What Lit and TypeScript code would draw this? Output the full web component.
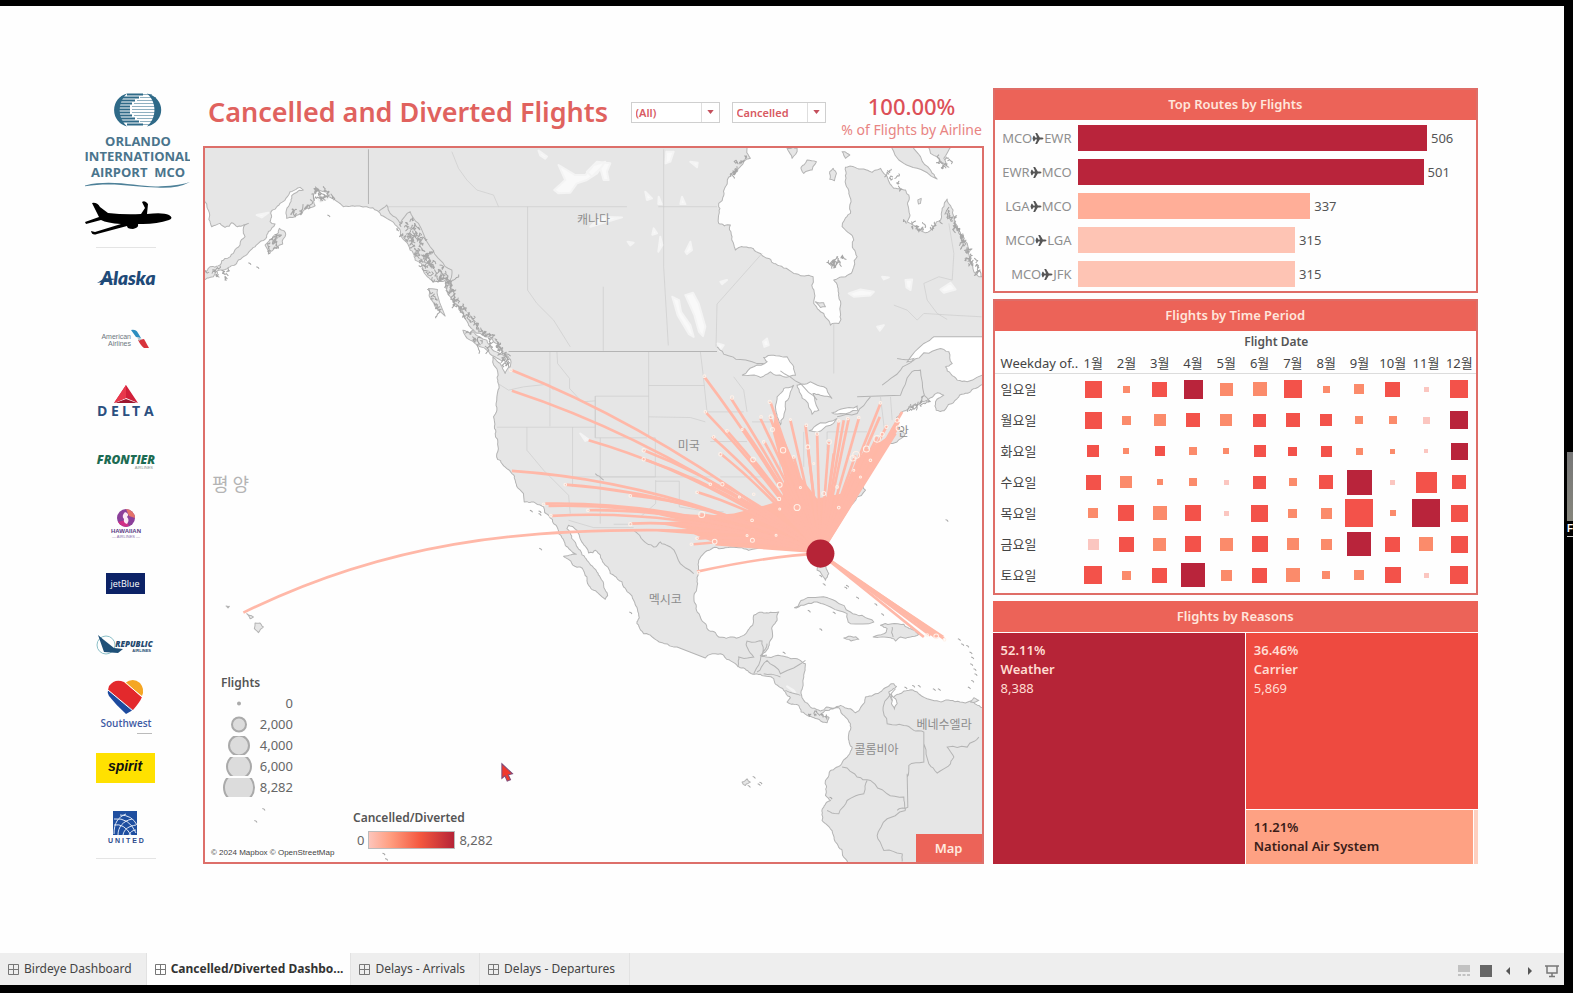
import { LitElement, html, svg, css } from "lit";
import { customElement, state } from "lit/decorators.js";

type Pt = [number, number];

/* ---------- map geometry ---------- */

const parse = (s: string, dx = 0, dy = 0): Pt[] =>
  s.trim().split(/\s+/).map((p) => {
    const [x, y] = p.split(",").map(Number);
    return [x + dx, y + dy] as Pt;
  });

let seed = 7;
const rnd = () => {
  seed = (seed * 16807) % 2147483647;
  return seed / 2147483647 - 0.5;
};

/* Midpoint displacement gives the coast its ragged outline. */
const rough = (pts: Pt[], amp: number, depth = 2): Pt[] => {
  let out = pts;
  for (let d = 0; d < depth; d++) {
    const next: Pt[] = [];
    for (let i = 0; i < out.length - 1; i++) {
      const [x1, y1] = out[i];
      const [x2, y2] = out[i + 1];
      next.push(out[i]);
      const len = Math.hypot(x2 - x1, y2 - y1);
      if (len > 9 && len < 90) {
        const k = Math.min(amp, len * 0.3);
        next.push([(x1 + x2) / 2 + rnd() * k, (y1 + y2) / 2 + rnd() * k]);
      }
    }
    next.push(out[out.length - 1]);
    out = next;
  }
  return out;
};

const line = (pts: Pt[], close = false) =>
  "M" + pts.map(([x, y]) => `${x.toFixed(1)} ${y.toFixed(1)}`).join("L") + (close ? "Z" : "");

const E = 1170;

const mainland: Pt[] = [
  ...parse(`0,190 0,365 15,365 25,390 35,440 60,430 75,442 95,428 112,440 145,430 130,445 135,470 120,495
   100,520 75,535 60,555 30,560 10,580 10,600 40,590 60,570 85,562 110,550 115,540 150,512 175,490 200,465 225,432
   210,425 212,400 240,370 262,350 270,335 300,322 310,330 275,347 265,380 260,415 285,410 320,385 345,377
   340,345 350,325 380,335 385,350 405,360 430,380 470,378 500,380 535,395 560,415 600,450 612,480 630,510
   645,540 670,572 700,605 735,600 740,630 765,670 790,700 805,735 840,760 870,770 900,800 925,830 930,860
   915,880 900,850 878,830 885,860 893,900 890,950 880,1010 885,1060 890,1120 905,1150 920,1165 935,1180
   945,1200 970,1240 972,1265 1000,1265 1030,1280 1045,1305 1060,1330 1075,1360 1095,1395 1128,1422 1090,1428
   1115,1450 1140,1460 1160,1490 1165,1515 1195,1540 1215,1557 1222,1546 1210,1515 1190,1475 1160,1440
   1140,1410 1120,1380 1100,1345 1105,1335 1130,1350 1142,1380 1165,1418`),
  ...parse(`15,240 35,268 60,310 100,350 130,390 145,430 140,460 160,490 200,510 260,530 345,563 375,550 400,555
   440,585 475,605 510,612 550,625 580,660 600,682 590,695 625,705 650,735 680,745 710,757 716,742 690,732
   720,716 745,712 770,745 780,760 775,790 785,830 770,860 750,885 720,900 705,930 705,975 720,990 700,1010
   695,1050 720,1075 740,1120 765,1165 780,1190 1190,1190 1190,720 1165,705 1140,692 1080,690 1010,685
   980,665 940,662 915,675 905,690 900,680 895,665 918,648 910,640 880,655 855,670 825,680 815,705 795,727
   780,715 750,705 720,712 690,722 660,710 640,690 632,670 640,620 645,580 620,565 580,558 530,560 510,555
   525,545 540,510 545,470 560,450 565,425 525,428 490,435 480,470 460,495 420,500 385,500 355,480 330,440
   315,400 320,350 325,300 325,270 345,245 380,232 420,230 500,235 540,225 600,230 650,240 670,270 680,300
   705,330 715,310 710,270 700,230 715,200 760,130 800,80 825,60 815,45 810,20 830,0`, E, E),
  ...parse(`835,1160 880,1100 945,1060 925,1045 915,1020 935,995 960,980 1010,960 1040,938 1060,945 1035,965
   1037,990 1060,992 1100,955 1140,935 1190,910 1190,600 1165,590 1140,545 1130,490 1105,460 1090,410 1070,357 1055,385
   1050,420 1020,450 1005,458 980,440 950,425 955,390 955,345 945,330 910,325 890,290 870,265 845,277 800,265
   765,262 765,300 775,340 780,400 755,440 790,480 800,530 790,560 765,590 730,600 745,640 750,700 745,730
   720,735 700,700 670,670 668,590 610,580 550,550 510,520 475,503 435,510 425,470 420,435 385,430 385,370
   405,320 425,280 450,260 480,235 470,190`, E, 0),
];

const islands: Pt[][] = [
  parse("685,625 712,628 715,655 735,708 705,680 688,650"),
  parse("788,750 820,755 860,780 880,812 920,830 905,842 870,822 840,800 810,780"),
  parse("195,495 225,470 238,445 257,462 248,492 220,508 205,522"),
  parse("590,205 620,205 605,235", E),
  parse("632,262 650,240 678,245 665,270 640,280", E),
  parse("718,275 728,265 738,280 732,302 718,298", E),
  parse("755,215 778,225 765,235", E),
  parse("890,190 925,240 980,265 1040,297 1020,270 990,230 960,190", E),
  parse("1000,190 1020,220 1050,245 1075,262 1060,235 1085,200", E),
  parse("982,360 992,355 990,370 984,372", E),
  parse("1072,780 1100,785 1135,805 1115,810 1085,797", E),
  parse("675,665 700,668 705,680 690,682", E),
  parse("612,412 640,388 690,380 735,392 780,425 815,435 850,455 780,460 770,430 720,410 680,395 640,405", E, E),
  parse("760,503 780,498 805,507 782,512", E, E),
  parse("870,465 905,460 940,462 960,475 985,492 960,500 930,500 915,512 900,502 848,500 880,490 890,475", E, E),
  parse("1150,682 1140,695 1165,690", E, E),
  parse("165,1628 180,1628 190,1640 175,1657 163,1645"),
  parse("140,1600 160,1610 150,1615"),
  parse("78,1577 88,1578 84,1583"),
  parse("455,935 470,925 480,935 465,945", E, E),
];

const waters: Pt[][] = [
  parse("950,845 1000,790 1030,770 1190,770 1190,885 1130,905 1100,900 1080,880 1065,860 1085,850 1075,815 1050,805 1000,818 968,842", E),
  parse("455,885 490,860 530,845 520,832 550,825 590,830 610,860 615,885 580,890 540,875 510,892 480,885", E),
  parse("555,980 560,950 580,925 610,915 600,935 585,965 580,1010 570,1035 560,1010", E),
  parse("620,915 660,905 700,920 725,955 690,945 668,940 685,990 665,1002 645,960 630,940", E),
  parse("655,1052 690,1028 740,1015 720,1035 680,1055", E),
  parse("725,998 750,987 800,978 802,990 750,1000", E),
  parse("903,672 915,685 920,700 912,715 903,700", E, E),
];

const lakes: Pt[][] = [
  parse("285,645 308,638 325,670 345,740 338,768 326,755 312,705", E),
  parse("246,650 266,660 272,695 300,735 310,770 296,762 262,705", E),
  parse("1062,330 1095,300 1075,255 1125,285 1155,285 1180,255 1215,245 1190,280 1160,300 1130,310 1110,338 1075,340"),
  parse("1015,212 1040,230 1035,236 1020,226"),
  parse("-10,275 20,245 60,250 50,275 55,300 40,300 30,265 5,290", E),
  parse("228,215 250,215 240,245 226,250", E),
  parse("300,245 322,248 320,262", E),
  parse("275,350 285,372 270,372", E),
  parse("165,335 185,355 170,360", E),
  parse("205,350 214,372 204,372", E),
  parse("30,410 95,412 50,425 0,440", E),
  parse("190,445 200,460 186,464", E),
  parse("210,470 216,495 204,515", E),
  parse("285,515 300,485 305,510 290,522", E),
  parse("112,485 130,488 120,496", E),
  parse("390,605 410,600 395,612", E),
  parse("518,785 530,775 535,795 522,800", E),
  parse("382,790 400,795 388,812", E),
  parse("775,640 810,628 850,635 840,646 790,650", E),
  parse("945,600 965,598 960,630 948,622", E),
  parse("1050,628 1080,608 1095,628 1060,638", E),
  parse("875,590 895,592 880,598", E),
  parse("860,740 880,735 868,752", E),
  parse("170,405 205,398 185,412"),
  parse("350,350 385,355 360,365"),
  parse("1140,1060 1165,1078 1155,1082"),
  parse("590,648 610,660 615,668", E, E),
];

const borders: Pt[][] = [
  parse("505,208 505,372"), parse("925,814 1550,814"),
];
const states: Pt[][] = [
  parse("560,380 895,380"), parse("895,380 1280,380"), parse("1374,380 1550,380"),
  parse("755,215 775,265 800,300 830,330 880,345 895,380"),
  parse("982,380 982,630 1010,670 1060,720 1110,800"),
  parse("1390,208 1390,560 1404,796"), parse("1209,620 1209,812"),
  parse("1685,520 1550,672 1547,800"), parse("1900,730 1900,880"),
  parse("1049,815 1049,1038"), parse("1070,815 1072,850 1108,895 1108,925 1145,965 1185,962"),
  parse("893,910 925,930 970,920 1045,912 1060,930"),
  parse("890,1041 1185,1041 1185,1073 1340,1073"), parse("980,1041 980,1110 1030,1170 1105,1245 1110,1300"),
  parse("1117,1041 1117,1220"), parse("1185,948 1185,1041"), parse("1185,948 1345,948 1345,815"),
  parse("1185,1073 1185,948"), parse("1345,916 1512,916"), parse("1345,948 1345,1073 1365,1073 1365,1190"),
  parse("1345,1010 1470,1012 1515,1025"), parse("1500,815 1508,880 1520,995"), parse("1515,995 1630,995"),
  parse("1530,1084 1640,1084"), parse("1200,1190 1540,1190"), parse("1366,1200 1366,1270 1320,1310"),
  parse("1366,1203 1437,1203 1437,1280 1500,1290 1570,1295"), parse("1200,1073 1200,1190 1200,1330"),
  parse("1110,1190 1366,1190"), parse("1105,1320 1180,1342 1300,1342"), parse("1240,1332 1300,1332"),
  parse("1640,995 1630,930 1600,890"), parse("1655,1025 1710,1025"), parse("1730,1040 1740,1170"),
  parse("1810,1055 1810,1160"), parse("1880,1055 1880,1110"), parse("1880,1055 2000,1055"),
  parse("1560,1190 1700,1190"), parse("2040,950 2052,1050"), parse("2070,950 2075,1020"),
  parse("2080,675 2120,690 2150,720 2170,700 2250,705 2343,710"),
  parse("2245,430 2260,520 2255,600 2215,590 2170,610 2180,660 2210,700 2240,718"),
];
const coasts: Pt[][] = [
  parse("1550,800 1570,822 1620,838 1690,850"),
  parse("2045,915 2100,870 2140,835 2090,835"),
  parse("1970,950 2100,945 2130,880 2160,870 2170,940 2190,965"),
  parse("1740,872 1800,910 1850,960"),
  parse("1910,1010 1970,1000 2010,950"),
  parse("1300,1350 1330,1382 1360,1400 1380,1385 1410,1400 1440,1450 1480,1480"),
  parse("1612,1760 1615,1730 1660,1730 1640,1700 1640,1682 1685,1682 1685,1725 1700,1725"),
  parse("1700,1690 1682,1725 1660,1780"), parse("1670,1775 1700,1740 1740,1780 1815,1740"),
  parse("1690,1780 1740,1790"), parse("1755,1830 1800,1845"),
  parse("2085,1825 2048,1880 2060,1930 2110,1935 2140,1950 2170,1955 2170,2045 2125,2055 2120,2090"),
  parse("2170,1990 2185,2050 2210,2078 2250,2050 2260,2030 2240,2000 2300,2000 2335,1970"),
  parse("2120,2080 2122,2180 2090,2190"), parse("1925,2060 1970,2090 2010,2100 2060,2140 2110,2150 2115,2190"),
  parse("2000,2100 1990,2140 1940,2160 1915,2200 1880,2190"),
  parse("2115,2190 2060,2215 2030,2265 2050,2310 2105,2320 2105,2343"),
  parse("1185,1180 1210,1200"), parse("2075,1640 2078,1670"),
  parse("535,395 560,375 570,400 600,430 630,395 655,430 690,500 720,540 755,570 750,600"),
];

/* Dense fjord scribble scattered around a spine. */
const scribble = (spine: Pt[], spread: number, n: number) => {
  let d = "";
  for (let i = 0; i < spine.length - 1; i++) {
    for (let k = 0; k < n; k++) {
      const t = (k + 0.5) / n;
      let x = spine[i][0] + (spine[i + 1][0] - spine[i][0]) * t + rnd() * spread;
      let y = spine[i][1] + (spine[i + 1][1] - spine[i][1]) * t + rnd() * spread;
      d += `M${x.toFixed(1)} ${y.toFixed(1)}`;
      for (let j = 0; j < 5; j++) {
        x += rnd() * 13;
        y += rnd() * 15;
        d += `L${x.toFixed(1)} ${y.toFixed(1)}`;
      }
    }
  }
  return d;
};
const fjords =
  scribble(parse("615,430 640,480 670,540 720,580"), 46, 26) +
  scribble(parse("700,590 750,600 745,630 780,680 815,720 860,765 905,810 925,860"), 18, 12) +
  scribble(parse("340,350 385,345"), 34, 18) +
  scribble(parse("690,640 725,700"), 8, 10) + scribble(parse("800,755 860,805"), 8, 10) +
  scribble(parse("205,510 245,470"), 24, 14) + scribble(parse("25,575 80,585"), 20, 10) +
  scribble(parse("265,405 330,380"), 10, 10) +
  scribble(parse("2245,390 2275,460 2300,520 2335,580"), 16, 14) +
  scribble(parse("2120,430 2160,445 2220,420"), 12, 6) +
  scribble(parse("1590,290 1630,240"), 14, 10) + scribble(parse("1895,545 1915,545"), 30, 16) +
  scribble(parse("2060,270 2100,320"), 10, 6) + scribble(parse("2215,260 2250,240"), 24, 8) +
  scribble(parse("2120,980 2180,965"), 10, 10) + scribble(parse("1830,1900 1890,1915"), 10, 5);

const dots: Pt[] = [
  ...parse("148,548 172,560 385,405 190,2184 166,2220 1020,1404 992,1290 1018,1300 1018,1292 550,2318 558,2334"),
  ...parse(`770,345 800,380 855,400 875,430 765,350 690,475 730,425 655,420 1068,148 580,545 120,425 1105,505 1115,520
    1130,525 1140,545 1145,560 1142,580 1152,595 1155,610 1145,630 1135,650 968,645 985,645 1030,655 1045,655 945,650
    490,918 505,940 510,935 475,945 720,980 700,340 690,315`, E, E),
];

const hub: Pt = [1860, 1420];
const routes: Pt[] = [
  ...parse(`935,870 935,932 1165,1080 935,1172 1095,1213 1035,1270 1045,1277 1055,1307 1165,1290 1512,890 1592,955
  1515,995 1535,1070 1330,1110 1330,1137 1560,1120 1580,1052 1710,965 1708,1010 1680,1015 1630,1045 1770,1020
  1815,1035 1822,1100 1850,1060 1885,1085 1915,1025 1930,1020 1945,1015 1975,1015 2040,970 2038,1010 2060,1035
  2105,995 2095,1025 2092,1042 2085,1060 2030,1070 2025,1085 2000,1105 1965,1125 1660,1140 1692,1085 1490,1375
  1480,1392 1540,1385 1290,1330 1290,1245 1500,1302 1490,1235 1530,1212 1560,1210 1750,1110 1780,1130 1900,1120
  2170,1670 2190,1665 2210,1668 2230,1675 1655,1310 1735,1265 1790,1282`),
];
const routePath = ([x, y]: Pt) => {
  const dx = hub[0] - x;
  const mx = (x + hub[0]) / 2;
  const my = (y + hub[1]) / 2 - Math.max(0, dx) * 0.1 * (y > 1600 ? 0 : 1);
  return `M${x} ${y}Q${mx} ${my} ${hub[0]} ${hub[1]}`;
};
const rings: [number, number, number][] = [
  [1330, 1110, 5], [1330, 1137, 5], [1595, 952, 5], [1708, 965, 5], [1712, 1010, 6], [1716, 1048, 6], [1682, 1010, 4],
  [1748, 1110, 8], [1780, 1130, 4], [1822, 1100, 6], [1818, 1035, 4], [1850, 1060, 5], [1886, 1085, 7], [1915, 1022, 4],
  [1942, 1015, 4], [1975, 1012, 4], [2040, 968, 4], [2058, 1040, 5], [2090, 1020, 6], [2094, 1044, 7], [2030, 1076, 10],
  [2045, 1062, 6], [1998, 1106, 9], [1967, 1124, 10], [1957, 1134, 8], [1658, 1138, 7], [1580, 1052, 4], [1540, 1070, 4],
  [1560, 1122, 5], [1512, 888, 4], [1515, 995, 4], [1504, 1303, 9], [1543, 1384, 7], [1290, 1247, 4], [1290, 1332, 5],
  [1738, 1214, 7], [1790, 1282, 9], [1870, 1240, 6], [1656, 1380, 6], [1640, 1366, 3], [1727, 1365, 3], [1736, 1256, 5],
  [1660, 1242, 4], [1530, 1212, 4], [1566, 1212, 5], [1490, 1236, 4], [1915, 1282, 4], [1910, 1220, 4], [1960, 1170, 3],
  [2010, 1140, 4], [1980, 1190, 3], [1617, 1250, 3], [1800, 1222, 3], [1738, 1286, 3], [1655, 1320, 4], [1490, 1374, 4],
  [1473, 1392, 4], [1495, 1477, 4], [2207, 1668, 7], [2180, 1664, 4], [2232, 1678, 4], [932, 870, 4], [1095, 1213, 4],
  [1030, 1272, 4], [1163, 1290, 4], [1052, 1306, 4], [1690, 1085, 4], [1625, 1048, 3], [1770, 1018, 3], [1840, 1150, 3],
];

const roughMain = line(rough(mainland, 14, 3), true);
const roughIslands = islands.map((p) => line(rough([...p, p[0]], 8, 2), true)).join("");
const roughWaters = waters.map((p) => line(rough([...p, p[0]], 7, 2), true)).join("");
const lakePaths = lakes.map((p) => line(p, true)).join("");
const statePath = states.map((p) => line(p)).join("");
const borderPath = borders.map((p) => line(p)).join("");
const coastPath = coasts.map((p) => line(rough(p, 8, 2))).join("");

const mapArt = svg`
  <path class="land" d=${roughMain}></path>
  <path class="land" d=${roughIslands}></path>
  <path class="states" d=${statePath}></path>
  <path class="lake" d=${lakePaths}></path>
  <path class="water" d=${roughWaters}></path>
  <path class="coast" d=${coastPath}></path>
  <path class="border" d=${borderPath}></path>
  <path class="fjord" d=${fjords}></path>
  ${dots.map(([x, y]) => svg`<path class="fjord" d=${`M${x - 3} ${y}l5 2l3 4`}></path>`)}
  <g class="places">
    <text x="1130" y="432">캐나다</text>
    <text x="1432" y="1108">미국</text>
    <text x="1345" y="1570">멕시코</text>
    <text x="1962" y="2020">콜롬비아</text>
    <text x="2148" y="1947">베네수엘라</text>
    <text x="2092" y="1066">안</text>
    <text class="ocean" x="36" y="1232">평 양</text>
  </g>
  <path class="fan" d="M1860 1420L2088 1050L2040 1085L1985 1120L1950 1180L1925 1240L1850 1255L1800 1190L1722 1010L1718 1060L1752 1190L1745 1260L1660 1285L1600 1300L1530 1306L1420 1300L1340 1296L1450 1322L1360 1328L1460 1346L1370 1354L1480 1362L1545 1388L1545 1396Z"></path>
  <g class="routes">${routes.map((r) => svg`<path d=${routePath(r)}></path>`)}
    <path d="M130 1597C560 1385 960 1345 1400 1350S1780 1400 1860 1420"></path>
    <path d="M1490 1474C1600 1450 1750 1425 1860 1420"></path>
  </g>
  <path class="fan" d="M1860 1420L2232 1668L2200 1672L2090 1582Z"></path>
  ${rings.map(([x, y, r]) => svg`<circle class="ring" cx=${x} cy=${y} r=${r}></circle>`)}
  <circle class="hub" cx="1860" cy="1420" r="42"></circle>
  <path class="pointer" d="M905 2050V2094L914 2086L921 2102L931 2098L924 2083L937 2080Z"></path>
`;

/* ---------- logos ---------- */

const mcoMark = html`<svg class="mco" viewBox="0 0 105 92" role="img" aria-label="Orlando International Airport MCO">
  <g fill="none" stroke="#2f6a88" stroke-width="2">
    <path d="M42 5.500h16M36 8.500h18M33 11.500h17M31 14.500h16M30 17.500h15M30 20.500h15M30 23.500h15M31 26.500h16M33 29.500h17M36 32.500h18M42 35.500h16"></path>
    <path stroke="#8fb0c0" stroke-width="1.200" d="M58 5.500h9M55 8.500h16M52 11.500h20M49 14.500h25M47 17.500h28M47 20.500h28M47 23.500h28M49 26.500h25M52 29.500h20M55 32.500h16M58 35.500h9"></path>
  </g>
  <path fill="#2f6a88" d="M42 4.500A17 17 0 0 0 42 37.500A22 22 0 0 1 42 4.500Z"></path>
  <path fill="#2f6a88" d="M62 4.500C81 9 81 33 62 37.500C72 29 72 13 62 4.500Z"></path>
  <g font-family="Open Sans, Noto Sans, sans-serif" font-weight="700" font-size="13" fill="#4a748c" text-anchor="middle">
    <text x="53" y="57">ORLANDO</text><text x="53" y="72">INTERNATIONAL</text><text x="53" y="88">AIRPORT\u00a0 MCO</text>
  </g>
</svg>
<svg class="swoosh" viewBox="0 0 105 8" preserveAspectRatio="none" aria-hidden="true"><path d="M0 5C30-3 55 8 76 6Q96 5 105 1Q92 9 72 7.500C50 7 28 1 0 6Z" fill="#4d8098"></path></svg>`;

const jet = html`<svg class="jet" viewBox="0 0 88 36" role="img" aria-label="Airplane">
  <path d="M7 3Q12 2 15 7L23 13Q40 15 56 14L60 8L57 2Q60 0 63 4L62 14Q78 12 84 15Q89 18 84 20Q72 24 58 24L53 24Q54 28 48 29Q42 29 42 26L12 34Q7 36 6 31L10 32L36 24Q22 23 16 20L1 24L0 22L14 17Z"></path></svg>`;

const F = "Liberation Sans, Arial, sans-serif";
const airlines = [
  { name: "Alaska", art: svg`<text x="32" y="37" font-family="Lato, sans-serif" font-style="italic" font-weight="800" font-size="19" fill="#1f4a78" text-anchor="middle">Alaska</text><path d="M1 35L9 30L20 31L12 33Z" fill="#1f4a78"></path>` },
  { name: "American Airlines", art: svg`<g font-family=${F} font-size="7" fill="#6d7780" text-anchor="end"><text x="35" y="30">American</text><text x="35" y="37">Airlines</text></g><path d="M35 21Q40 20 42 24L45 29L40 28Z" fill="#2c8ec0"></path><path d="M42 31L48 30L53 39H48Q45 37 42 31Z" fill="#d8343c"></path><path d="M41 28L46 30L43 32Z" fill="#b8c4cc"></path>` },
  { name: "Delta", art: svg`<path d="M30 15L42 33L30 28L18 33Z" fill="#d1203a"></path><path d="M30 15V28L18 33Z" fill="#e8384c"></path><path d="M30 29L41 33H19Z" fill="#9c1830"></path><g font-family="Open Sans, sans-serif" font-weight="700" font-size="14" fill="#2b4f80"><text x="1" y="46">D</text><text x="15" y="46">E</text><text x="26" y="46">L</text><text x="36" y="46">T</text><text x="48" y="46">A</text></g>` },
  { name: "Frontier", art: svg`<text x="30" y="33" font-family="Open Sans, sans-serif" font-style="italic" font-weight="800" font-size="12" fill="#1c6b52" text-anchor="middle">FRONTIER</text><text x="57" y="38" font-family=${F} font-size="4" fill="#8a9490" text-anchor="end">AIRLINES</text>` },
  { name: "Hawaiian Airlines", art: svg`<circle cx="30" cy="26" r="9" fill="#8b3f9a"></circle><path d="M30 17A9 9 0 0 1 39 26L33 24Z" fill="#e4726a"></path><path d="M22 30A9 9 0 0 0 33 34L30 28Z" fill="#d02f86"></path><path d="M29 20Q34 22 31 25Q34 28 31 32Q27 31 28 27Q25 24 29 20Z" fill="#fbe9f4"></path><text x="30" y="41" font-family=${F} font-weight="700" font-size="6" fill="#5b3c86" text-anchor="middle">HAWAIIAN</text><text x="30" y="46" font-family=${F} font-size="4" fill="#8a70ac" text-anchor="middle">— AIRLINES —</text>` },
  { name: "jetBlue", art: svg`<rect x="10" y="20" width="39" height="21" fill="#0c2266"></rect><text x="29" y="34" font-family="Open Sans, sans-serif" font-size="9" fill="#fff" text-anchor="middle">jetBlue</text>` },
  { name: "Republic Airlines", art: svg`<circle cx="10" cy="31" r="9" fill="none" stroke="#8cc0c8" stroke-width="1"></circle><path d="M2 21L8 26L18 34L27 35L22 39L8 38Z" fill="#1f5078"></path><text x="38" y="33" font-family="Open Sans, sans-serif" font-style="italic" font-weight="800" font-size="8" fill="#23486e" text-anchor="middle">REPUBLIC</text><text x="55" y="38" font-family=${F} font-weight="700" font-size="4" fill="#23486e" text-anchor="end">AIRLINES</text>` },
  { name: "Southwest", art: svg`<path d="M12 15L37 35L30 39Q20 30 13 21Q11 18 12 15Z" fill="#1d4a9e"></path><path d="M13 11Q19 3 28 7L46 22Q44 27 37 35L12 15Z" fill="#e3292c"></path><path d="M29 8Q37 2 44 8Q49 14 46 21Z" fill="#f5a623"></path><path d="M12 15L37 36M29 7L46 22" stroke="#fff" stroke-width="1"></path><text x="30" y="52" font-family="Open Sans, sans-serif" font-weight="600" font-size="10" fill="#3f5ba4" text-anchor="middle">Southwest</text><path d="M41 58.500h15" stroke="#bbb" stroke-width="1"></path>` },
  { name: "Spirit", art: svg`<rect x="0" y="17" width="59" height="30" fill="#ffe100"></rect><text x="29" y="35" font-family=${F} font-style="italic" font-weight="700" font-size="14" fill="#111" text-anchor="middle">spirit</text>` },
  { name: "United", art: svg`<rect x="17" y="14" width="24" height="24" fill="#1f4fa0"></rect><g fill="none" stroke="#dfe8f6" stroke-width="1"><path d="M18 37C18 26 22 20 30 17M22 38C22 30 27 24 36 22M27 38C28 32 33 29 40 28M33 38C34 35 37 33 40 33M18 28Q28 26 35 38M18 22Q33 20 40 36M24 18Q36 18 41 28"></path></g><text x="30" y="46" font-family=${F} font-weight="700" font-size="7" fill="#2c4a8c" text-anchor="middle">U N I T E D</text>` },
];

/* ---------- data ---------- */

const topRoutes = [
  { from: "MCO", to: "EWR", n: 506, tone: "deep" },
  { from: "EWR", to: "MCO", n: 501, tone: "deep" },
  { from: "LGA", to: "MCO", n: 337, tone: "mid" },
  { from: "MCO", to: "LGA", n: 315, tone: "pale" },
  { from: "MCO", to: "JFK", n: 315, tone: "pale" },
];
const SCALE_MAX = 577;

const heat: [string, string][] = [
  ["일요일", "17r 7o 15r 19d 13o 14o 18r 7o 10o 15r 5p 18r"],
  ["월요일", "17r 9o 12o 14r 12o 13r 14r 12r 8o 8o 7p 18d"],
  ["화요일", "12r 6o 10r 8o 6o 12r 9r 11r 7o 5o 4p 17d"],
  ["수요일", "15r 12o 6o 8o 5p 13r 8o 14r 25d 5p 21r 14r"],
  ["목요일", "10o 16r 14o 16r 5p 17r 9o 11o 28r 6o 28d 17r"],
  ["금요일", "11p 15r 13o 16r 13o 16r 12o 11o 24d 15r 14o 17r"],
  ["토요일", "18r 9o 15r 24d 11o 15r 14o 8o 10o 16r 5p 18r"],
];

const sizes = [
  { r: 1, label: "0" }, { r: 7, label: "2,000" }, { r: 10, label: "4,000" },
  { r: 12, label: "6,000" }, { r: 15, label: "8,282" },
];

const gridIcon = html`<svg class="sheet" viewBox="0 0 13 13" aria-hidden="true"><path d="M1.500 1.500h10v10h-10zM6.500 1.500v10M1.500 6.500h10" fill="none" stroke="#777"></path></svg>`;
const arrow = html`<svg class="caret" viewBox="0 0 8 5" aria-hidden="true"><path d="M0 0H8L4 5Z" fill="#c4505c"></path></svg>`;

@customElement("app-root")
export class AppRoot extends LitElement {
  @state() private tab = 1;

  private tabs = ["Birdeye Dashboard", "Cancelled/Diverted Dashbo...", "Delays - Arrivals", "Delays - Departures"];

  static styles = css`
    :host {
      display: block;
      font-family: "Noto Sans", "Noto Sans CJK KR", sans-serif;
      font-size: 13px;
      line-height: 18px;
      color: #444;
    }
    * { box-sizing: border-box; }
    .screen {
      display: flex;
      flex-direction: column;
      min-height: 100vh;
      background: #fefefe;
      border: solid #000;
      border-width: 6px 9px 8px 0;
      position: relative;
    }
    .edge {
      position: absolute;
      right: -9px;
      top: 446px;
      width: 6px;
      padding-top: 70px;
      background: linear-gradient(#777, #85857c) 0 0 / 100% 69px no-repeat;
      border-bottom: 1px solid #ccc;
      color: #fff;
      font: 700 10px/14px "Liberation Sans", sans-serif;
    }
    .board {
      flex: 1;
      display: grid;
      grid-template-columns: 105px minmax(0, 780fr) minmax(0, 486fr);
      align-items: start;
      align-content: start;
      padding: 82px 86px 24px 85px;
    }
    .brands { padding-top: 1px; }
    .mco { display: block; width: 105px; height: 92px; }
    .swoosh { display: block; width: 105px; height: 7px; }
    .jet { display: block; width: 88px; height: 36px; margin-top: 12px; }
    .airlines {
      list-style: none;
      margin: 11px 34px 0 11px;
      padding: 0;
      border: solid #e4e4e4;
      border-width: 1px 0;
    }
    .airlines li { height: 61px; }
    .airlines svg { display: block; width: 60px; height: 60px; }

    .centre { margin-left: 13px; }
    .head { display: flex; height: 58px; align-items: flex-start; padding: 0 2px 0 5px; }
    h1 { margin: 0; flex: 1; font-size: 27px; line-height: 48px; font-weight: 600; color: #e0625e; white-space: nowrap; }
    .pick { position: relative; margin: 14px 0 0 12px; }
    .pick select {
      appearance: none;
      display: block;
      height: 21px;
      padding: 0 20px 0 4px;
      border: 1px solid #cfcfcf;
      border-radius: 0;
      background: #fff;
      font: 600 11px/18px "Noto Sans", sans-serif;
      color: #d85a62;
    }
    .pick.all select { width: 89px; }
    .pick.kind select { width: 94px; }
    .pick::after { content: ""; position: absolute; right: 18px; top: 1px; height: 19px; border-left: 1px solid #dedede; }
    .caret { position: absolute; right: 6px; top: 8px; width: 7px; height: 4px; }
    .kpi { width: 140px; margin-left: 16px; text-align: center; padding-top: 4px; white-space: nowrap; }
    .kpi b { display: block; font-size: 22px; line-height: 28px; font-weight: 500; color: #dc5058; }
    .kpi span { color: #e88482; font-size: 14px; line-height: 20px; display: flex; justify-content: center; }

    .map { position: relative; border: 2px solid #dd6f6a; }
    .map > svg { display: block; width: 100%; height: auto; }
    .land { fill: #e6e6e6; stroke: #b4b4b4; stroke-width: 3; stroke-linejoin: round; }
    .water { fill: #fff; stroke: #b4b4b4; stroke-width: 3; }
    .lake { fill: #f9f9f9; stroke: #f4f4f4; stroke-width: 6; stroke-linejoin: round; }
    .states { fill: none; stroke: #cbcbcb; stroke-width: 2; }
    .border, .coast { fill: none; stroke: #b4b4b4; stroke-width: 3; }
    .fjord { fill: none; stroke: #a6a6a6; stroke-width: 3; stroke-linejoin: round; }
    .places { font: 36px "Noto Sans CJK KR", sans-serif; fill: #8c8c8c; }
    .ocean { font-size: 54px; fill: #b4b4b4; }
    .fan { fill: #ffb8a6; }
    .routes { fill: none; stroke: #ffb8a8; stroke-width: 8; }
    .ring { fill: none; stroke: #fff1e8; stroke-width: 3; }
    .hub { fill: #b62437; }
    .pointer { fill: #f0382c; stroke: #7d4a78; stroke-width: 3; }
    .sizes { position: absolute; left: 16px; bottom: 64px; width: 72px; }
    .sizes h3, .ramp h3 { margin: 0; font-size: 12px; line-height: 20px; font-weight: 600; color: #555; }
    .sizes ul { list-style: none; margin: 0; padding: 0; }
    .sizes li { display: flex; height: 21px; align-items: center; justify-content: space-between; color: #666; }
    .sizes svg { width: 36px; height: 19px; overflow: hidden; }
    .sizes circle { fill: #dcdcdc; stroke: #aaa; stroke-width: 2; }
    .ramp { position: absolute; left: 148px; bottom: 10px; }
    .ramp p { display: flex; align-items: center; gap: 4px; margin: 0; padding-left: 4px; line-height: 24px; color: #666; }
    .ramp i { width: 87px; height: 18px; border: 1px solid #bbb; background: linear-gradient(90deg, #fdc5bb, #ff9e80 25%, #f4583f 60%, #b62437); }
    .credit { position: absolute; left: 6px; bottom: 3px; font: 8px/12px "Liberation Sans", sans-serif; color: #444; }
    .mapbtn {
      position: absolute; right: 0; bottom: 0; width: 66px; height: 28px; padding: 0; border: 0;
      background: #ec6358; color: #ffe9df; font: 600 13px/26px "Noto Sans", sans-serif;
    }

    .side { display: flex; flex-direction: column; gap: 6px; margin-left: 9px; align-self: stretch; }
    .panel { border: 2px solid #df6d67; }
    h2 { margin: 0; background: #ec6358; color: #ffe6dc; font-size: 13px; font-weight: 600; text-align: center; }
    .panel h2 { line-height: 28px; padding-bottom: 2px; }
    .bars { margin: 0; padding: 5px 0 4px; display: grid; gap: 8px; }
    .bar { display: grid; grid-template-columns: 77px 1fr; column-gap: 6px; align-items: center; height: 26px; }
    .bar dt { text-align: right; color: #8f8f8f; }
    .bar dt svg { width: 12px; height: 11px; vertical-align: -1px; }
    .bar dd { margin: 0; display: flex; align-items: center; gap: 4px; color: #555; }
    .fill { height: 26px; }
    .deep { background: #b9243b; }
    .mid { background: #ffae98; }
    .pale { background: #fec4b4; }

    table { width: 100%; table-layout: fixed; border-collapse: collapse; margin-bottom: 2px; }
    th { font-weight: 400; padding: 0; white-space: nowrap; color: #444; }
    .date { height: 22px; line-height: 22px; font-size: 12px; font-weight: 600; color: #555; }
    .corner { width: 82px; }
    .months th { height: 20px; line-height: 20px; border-bottom: 1px solid #dcdcdc; }
    .months th:first-child, tbody th { text-align: left; padding-left: 6px; }
    td { height: 31px; padding: 0; }
    td i { display: block; margin: 0 auto; }
    .r { background: #f3524a; }
    .o { background: #fb8b6b; }
    .d { background: #b9243b; }
    .p { background: #fbc6c0; }

    .reasons { flex: 1; display: flex; flex-direction: column; }
    .reasons h2 { line-height: 31px; }
    .tree { flex: 1; display: grid; grid-template-columns: 252fr 232fr; grid-template-rows: 176fr 54fr; gap: 1px; padding-top: 1px; }
    .tree div { padding: 8px; line-height: 19px; font-weight: 600; color: #ffdcd2; }
    .tree span { display: block; }
    .tree .count { font-weight: 400; }
    .tree .weather { grid-row: span 2; background: #b62437; }
    .tree .carrier { background: #ee4a40; }
    .tree .rest { display: grid; grid-template-columns: 1fr 4px; gap: 1px; padding: 0; }
    .tree .nas { background: #fea183; color: #3a1c18; }
    .tree .other { background: #fed0c0; padding: 0; }

    .tabs { display: flex; height: 32px; background: #eee; align-items: stretch; }
    .tab {
      display: flex; align-items: center; gap: 4px; border: 0; border-right: 1px solid #e2e2e2; background: none;
      padding: 0 14px 0 7px; font: 12px/20px "Noto Sans", sans-serif; color: #444; white-space: nowrap;
    }
    .tab.on { background: #fefefe; font-weight: 700; color: #333; padding-right: 7px; }
    .sheet { flex: none; width: 13px; height: 13px; }
    .tools { margin-left: auto; display: flex; align-items: center; padding: 4px 1px 0 0; }
    .tools button { border: 0; background: none; padding: 0; width: 22px; height: 20px; display: grid; place-items: center; }
    .tools svg { width: 14px; height: 14px; }
  `;

  render() {
    return html`
      <div class="screen">
        <div class="edge">F</div>
        <main class="board">
          <aside class="brands">
            ${mcoMark}${jet}
            <ul class="airlines">
              ${airlines.map((a) => html`<li><svg viewBox="0 0 60 60" role="img" aria-label=${a.name}>${a.art}</svg></li>`)}
            </ul>
          </aside>

          <section class="centre">
            <header class="head">
              <h1>Cancelled and Diverted Flights</h1>
              <div class="pick all"><select aria-label="Airline"><option>(All)</option></select>${arrow}</div>
              <div class="pick kind"><select aria-label="Status"><option>Cancelled</option><option>Diverted</option></select>${arrow}</div>
              <div class="kpi"><b>100.00%</b><span>% of Flights by Airline</span></div>
            </header>
            <div class="map">
              <svg viewBox="15 204 2328 2139" role="img" aria-label="Route map">${mapArt}</svg>
              <div class="sizes">
                <h3>Flights</h3>
                <ul>
                  ${sizes.map((s) => html`<li><svg viewBox="0 0 36 19"><circle cx="18" cy="9.500" r=${s.r}></circle></svg>${s.label}</li>`)}
                </ul>
              </div>
              <div class="ramp"><h3>Cancelled/Diverted</h3><p>0<i></i>8,282</p></div>
              <div class="credit">© 2024 Mapbox © OpenStreetMap</div>
              <button class="mapbtn">Map</button>
            </div>
          </section>

          <section class="side">
            <div class="panel">
              <h2>Top Routes by Flights</h2>
              <dl class="bars">
                ${topRoutes.map((r) => html`<div class="bar">
                  <dt>${r.from}<svg viewBox="0 0 12 12" aria-hidden="true"><path fill="#555" d="M0 6L1 3H2L3 5H5L3 0H5L8 5H10Q12 5 12 6Q12 7 10 7H8L5 12H3L5 7H3L2 9H1Z"></path></svg>${r.to}</dt>
                  <dd><div class="fill ${r.tone}" style="width:${(r.n / SCALE_MAX) * 100}%"></div>${r.n}</dd>
                </div>`)}
              </dl>
            </div>

            <div class="panel">
              <h2>Flights by Time Period</h2>
              <table>
                <thead>
                  <tr><th class="date corner"></th><th class="date" colspan="12">Flight Date</th></tr>
                  <tr class="months"><th>Weekday of..</th>${Array.from({ length: 12 }, (_, i) => html`<th>${i + 1}월</th>`)}</tr>
                </thead>
                <tbody>
                  ${heat.map(([day, row]) => html`<tr><th scope="row">${day}</th>${row.split(" ").map((c) => {
                    const n = parseInt(c);
                    return html`<td><i class=${c.slice(-1)} style="width:${n}px;height:${n}px"></i></td>`;
                  })}</tr>`)}
                </tbody>
              </table>
            </div>

            <div class="reasons">
              <h2>Flights by Reasons</h2>
              <div class="tree">
                <div class="weather"><span>52.11%</span><span>Weather</span><span class="count">8,388</span></div>
                <div class="carrier"><span>36.46%</span><span>Carrier</span><span class="count">5,869</span></div>
                <div class="rest"><div class="nas"><span>11.21%</span><span>National Air System</span></div><div class="other"></div></div>
              </div>
            </div>
          </section>
        </main>

        <nav class="tabs">
          ${this.tabs.map((t, i) => html`<button class="tab ${i === this.tab ? "on" : ""}" @click=${() => (this.tab = i)}>${gridIcon}<span>${t}</span></button>`)}
          <div class="tools">
            <button aria-label="Show filmstrip"><svg viewBox="0 0 14 14"><path fill="#c2c2c2" d="M1 1h12v7H1zM1 10h3v2H1zM5.500 10h3v2h-3zM10 10h3v2h-3z"></path></svg></button>
            <button aria-label="Show tabs"><svg viewBox="0 0 14 14"><path fill="#666" d="M1 1h12v12H1z"></path></svg></button>
            <button aria-label="Previous"><svg viewBox="0 0 14 14"><path fill="#555" d="M9 3v8L5 7z"></path></svg></button>
            <button aria-label="Next"><svg viewBox="0 0 14 14"><path fill="#555" d="M5 3v8l4-4z"></path></svg></button>
            <button aria-label="Presentation mode"><svg viewBox="0 0 14 14"><path fill="none" stroke="#777" stroke-width="1.500" d="M0 2h14M2 2v7h10V2M7 9v3M4 12.500h6"></path></svg></button>
          </div>
        </nav>
      </div>
    `;
  }
}
